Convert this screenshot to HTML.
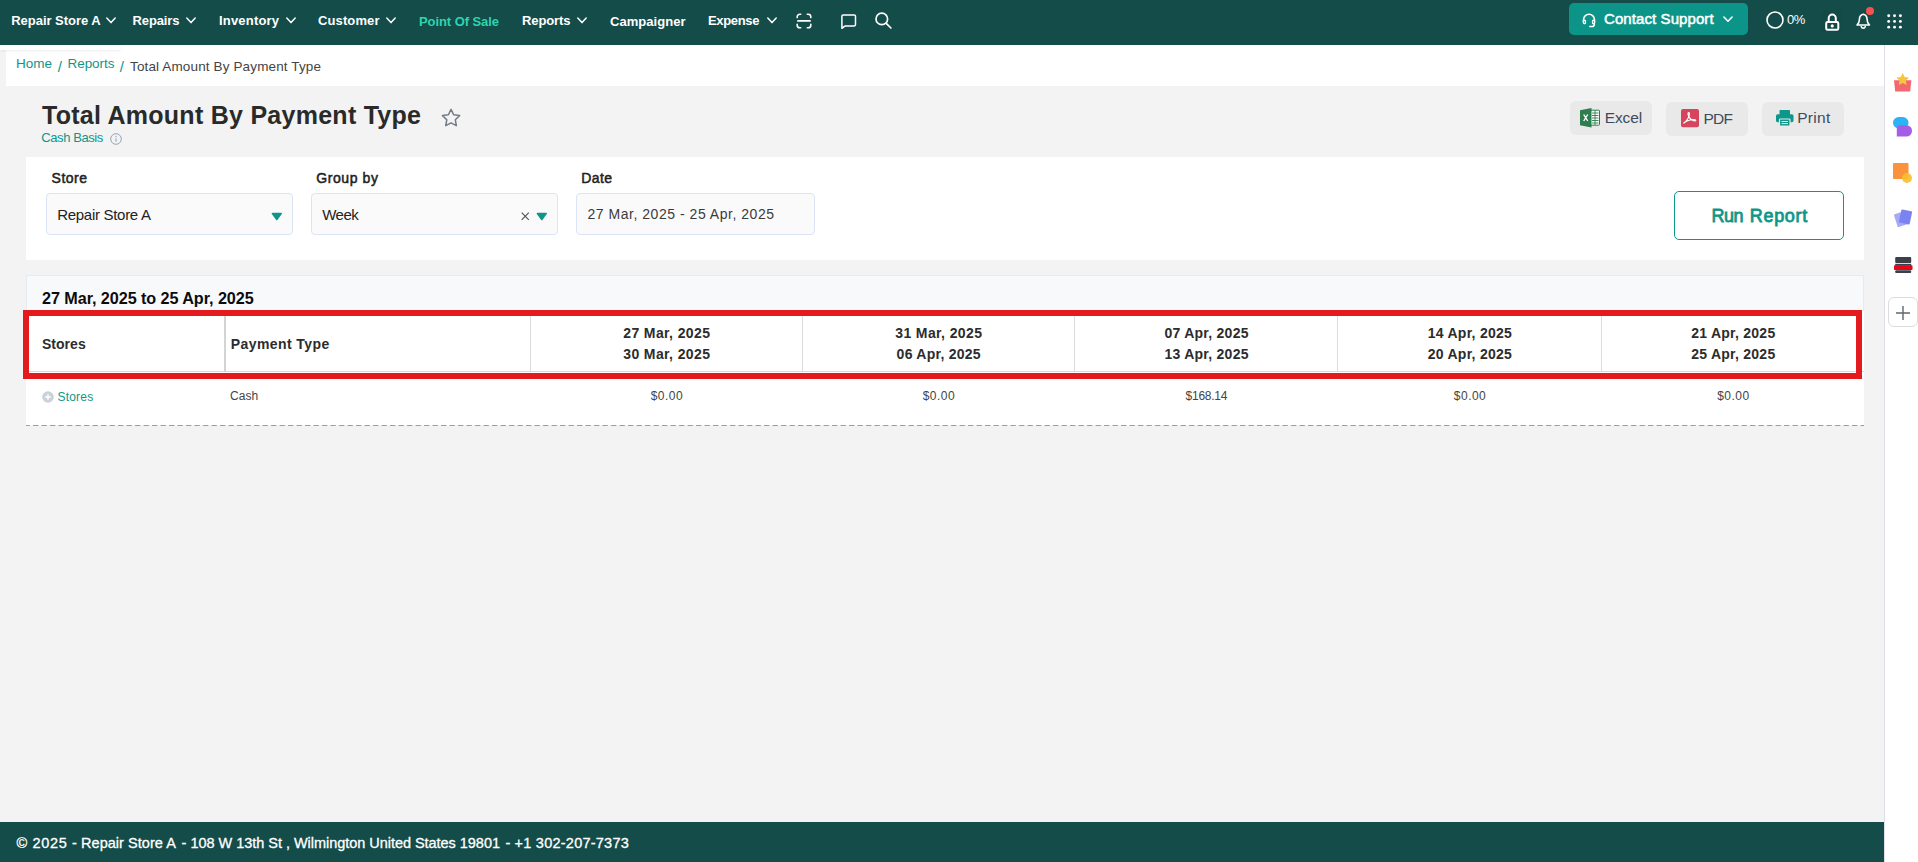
<!DOCTYPE html>
<html lang="en"><head><meta charset="utf-8"><title>Total Amount By Payment Type</title>
<style>
html,body{margin:0;padding:0}
body{width:1918px;height:862px;overflow:hidden;background:#f3f3f3;font-family:"Liberation Sans", sans-serif;position:relative}
.t{position:absolute;white-space:pre;line-height:1}
.b{position:absolute;box-sizing:border-box}
.ic{position:absolute;overflow:visible}
</style></head><body>
<!-- top navigation -->
<div class="b" style="left:0;top:0;width:1918px;height:45px;background:#144c4a"></div>
<div class="b" style="left:6px;top:45px;width:1878px;height:41px;background:#fff"></div>
<div class="b" style="left:0;top:45px;width:121px;height:5px;background:#fff;box-shadow:0 1px 3px rgba(0,0,0,.07)"></div>
<!-- nav chevrons -->
<svg class="ic" style="left:106px;top:17.2px" width="10" height="7" viewBox="0 0 10 7"><path d="M0.8 1 L5 5.6 L9.2 1" fill="none" stroke="#fff" stroke-width="1.5" stroke-linecap="round" stroke-linejoin="round"/></svg>
<svg class="ic" style="left:186px;top:17.2px" width="10" height="7" viewBox="0 0 10 7"><path d="M0.8 1 L5 5.6 L9.2 1" fill="none" stroke="#fff" stroke-width="1.5" stroke-linecap="round" stroke-linejoin="round"/></svg>
<svg class="ic" style="left:286px;top:17.2px" width="10" height="7" viewBox="0 0 10 7"><path d="M0.8 1 L5 5.6 L9.2 1" fill="none" stroke="#fff" stroke-width="1.5" stroke-linecap="round" stroke-linejoin="round"/></svg>
<svg class="ic" style="left:386px;top:17.2px" width="10" height="7" viewBox="0 0 10 7"><path d="M0.8 1 L5 5.6 L9.2 1" fill="none" stroke="#fff" stroke-width="1.5" stroke-linecap="round" stroke-linejoin="round"/></svg>
<svg class="ic" style="left:577px;top:17.2px" width="10" height="7" viewBox="0 0 10 7"><path d="M0.8 1 L5 5.6 L9.2 1" fill="none" stroke="#fff" stroke-width="1.5" stroke-linecap="round" stroke-linejoin="round"/></svg>
<svg class="ic" style="left:767px;top:17.2px" width="10" height="7" viewBox="0 0 10 7"><path d="M0.8 1 L5 5.6 L9.2 1" fill="none" stroke="#fff" stroke-width="1.5" stroke-linecap="round" stroke-linejoin="round"/></svg>
<!-- scan icon -->
<svg class="ic" style="left:796px;top:13px" width="16" height="16" viewBox="0 0 16 16" fill="none" stroke="#fff" stroke-width="1.6" stroke-linecap="round" stroke-linejoin="round"><path d="M1.2 4.600V3.800a2.600 2.600 0 0 1 2.600-2.600h.900M11.300 1.200h.900a2.600 2.600 0 0 1 2.600 2.600v.800M14.800 11.400v.800a2.600 2.600 0 0 1-2.600 2.600h-.900M4.700 14.800h-.900a2.600 2.600 0 0 1-2.600-2.600v-.800"/><path d="M2 7.900H14" stroke-width="1.900"/></svg>
<!-- chat icon -->
<svg class="ic" style="left:840.700px;top:14px" width="15.400" height="15" viewBox="0 0 15.400 15" fill="none" stroke="#fff" stroke-width="1.500" stroke-linejoin="round"><path d="M.9 2.200a1.300 1.300 0 0 1 1.300-1.300H13.200a1.300 1.300 0 0 1 1.300 1.300V10.600a1.300 1.300 0 0 1-1.300 1.300H4.200L.9 14.300Z"/></svg>
<!-- search icon -->
<svg class="ic" style="left:875px;top:11.700px" width="17" height="17" viewBox="0 0 17 17" fill="none" stroke="#fff" stroke-width="1.700" stroke-linecap="round"><circle cx="6.800" cy="6.900" r="5.800"/><path d="M11.200 11.300 L15.900 16"/></svg>
<!-- contact support -->
<div class="b" style="left:1569px;top:3px;width:179px;height:32px;background:#0d9488;border-radius:5px"></div>
<svg class="ic" style="left:1582.300px;top:12.800px" width="14" height="14.500" viewBox="0 0 14 14.500" fill="none" stroke="#fff" stroke-width="1.600" stroke-linecap="round"><path d="M1.500 9V6.700a5.500 5.500 0 0 1 11 0V9"/><rect x=".8" y="6.600" width="3.300" height="4.600" rx="1.500" fill="#fff" stroke="none"/><rect x="9.900" y="6.600" width="3.300" height="4.600" rx="1.500" fill="#fff" stroke="none"/><circle cx="2.600" cy="9" r=".7" fill="#0d9488" stroke="none"/><circle cx="11.400" cy="9" r=".7" fill="#0d9488" stroke="none"/><path d="M12.300 10.800v.4a2.300 2.300 0 0 1-2.300 2.300H7.800"/></svg>
<svg class="ic" style="left:1723px;top:16.200px" width="10" height="7" viewBox="0 0 10 7"><path d="M0.9 1 L5 5.200 L9.100 1" fill="none" stroke="#fff" stroke-width="1.600" stroke-linecap="round" stroke-linejoin="round"/></svg>
<!-- progress circle -->
<svg class="ic" style="left:1766px;top:10.700px" width="18" height="18" viewBox="0 0 18 18"><circle cx="9" cy="9" r="8" fill="none" stroke="#fff" stroke-width="1.600"/></svg>
<!-- lock -->
<div class="b" style="left:1821px;top:10px;width:21px;height:22px;background:#134a48;border-radius:2px"></div>
<svg class="ic" style="left:1824.500px;top:12.700px" width="14.500" height="18" viewBox="0 0 14.500 18" fill="none" stroke="#fff" stroke-width="2" stroke-linejoin="round"><path d="M3.700 9V5.200a3.550 3.700 0 0 1 7.100 0V9"/><rect x="1.200" y="9" width="12.100" height="7.800" rx="1.400"/><circle cx="7.250" cy="12.900" r="1.600" fill="#fff" stroke="none"/></svg>
<!-- bell -->
<svg class="ic" style="left:1855.700px;top:12.500px" width="14.500" height="17" viewBox="0 0 14.500 17" fill="none" stroke="#fff" stroke-width="1.600" stroke-linejoin="round" stroke-linecap="round"><path d="M7.250 1.200C5 1.800 3.400 3.800 3.400 6.400c0 3.300-1.600 4.900-2.400 5.600h12.500c-.8-.7-2.400-2.300-2.400-5.600 0-2.600-1.600-4.600-3.850-5.200Z"/><path d="M5.300 13.600a2 2 0 0 0 3.900 0"/></svg>
<div class="b" style="left:1866.200px;top:6.800px;width:8.200px;height:8.200px;border-radius:50%;background:#f8504f"></div>
<!-- app grid -->
<svg class="ic" style="left:1886.700px;top:13.600px" width="15.100" height="14.900" viewBox="0 0 15.100 14.900" fill="#fff"><circle cx="1.7" cy="1.7" r="1.450"/><circle cx="7.55" cy="1.7" r="1.450"/><circle cx="13.4" cy="1.7" r="1.450"/><circle cx="1.7" cy="7.4" r="1.450"/><circle cx="7.55" cy="7.4" r="1.450"/><circle cx="13.4" cy="7.4" r="1.450"/><circle cx="1.7" cy="13.15" r="1.450"/><circle cx="7.55" cy="13.15" r="1.450"/><circle cx="13.4" cy="13.15" r="1.450"/></svg>

<!-- right sidebar -->
<div class="b" style="left:1884px;top:45px;width:34px;height:817px;background:#fff;border-left:1px solid #dedee8"></div>
<svg class="ic" style="left:1893.700px;top:72.500px" width="17.400" height="18.500" viewBox="0 0 17.400 18.500"><path d="M0 7.200h17.400l-1.200 11.300H1.200Z" fill="#f2686e"/><path d="M8.700 0l1.950 3.950 4.350.63-3.150 3.070.74 4.330L8.700 9.940 4.810 11.980l.74-4.330L2.400 4.580l4.350-.63Z" fill="#f8c63d"/></svg>
<svg class="ic" style="left:1893px;top:116.800px" width="19" height="19.500" viewBox="0 0 19 19.500"><rect x="0" y="0" width="15.500" height="11.500" rx="5.700" fill="#2cb3f5"/><path d="M7.500 8.200h6a5.500 5.500 0 0 1 5.500 5.500v.300a5.500 5.500 0 0 1-5.500 5.500H3.800V11.900a3.700 3.700 0 0 1 3.700-3.700Z" fill="#a45ee5"/></svg>
<svg class="ic" style="left:1893px;top:162.800px" width="19" height="20" viewBox="0 0 19 20"><rect x="0" y="0" width="15.500" height="16" rx="1" fill="#fb923c"/><circle cx="14" cy="15" r="5" fill="#f6c02f" opacity=".9"/></svg>
<svg class="ic" style="left:1894px;top:209px" width="18" height="19" viewBox="0 0 18 19"><rect x="1.500" y="3.500" width="11.500" height="13.500" rx="1" fill="#a5aaf7" transform="rotate(-18 7 10)"/><rect x="6" y="1.200" width="11" height="13.500" rx="1" fill="#7b83f0" transform="rotate(12 11.500 8)"/></svg>
<svg class="ic" style="left:1893.500px;top:257px" width="18.500" height="16" viewBox="0 0 18.500 16"><rect x="1.200" y="0" width="16" height="6" rx="1" fill="#3a3f4a"/><rect x="1.200" y="6.800" width="16" height="2" fill="#3a3f4a"/><rect x="0" y="8.300" width="18.500" height="4.800" rx=".8" fill="#e0081b"/><rect x="1.200" y="13.300" width="16" height="2.700" rx="1" fill="#3a3f4a"/></svg>
<div class="b" style="left:1888px;top:297px;width:29.500px;height:30px;border:1px solid #dcdcdc;border-radius:6px;background:#fff"></div>
<svg class="ic" style="left:1896px;top:305.700px" width="14" height="14" viewBox="0 0 14 14"><path d="M7 0V14M0 7H14" stroke="#5f6672" stroke-width="1.400" fill="none"/></svg>

<!-- title row icons -->
<svg class="ic" style="left:440.500px;top:108.300px" width="20.100" height="19" viewBox="0 0 19 18"><path d="M9.500 1.300l2.500 5.100 5.600.8-4.050 3.950.95 5.600L9.500 14.100 4.500 16.750l.95-5.600L1.400 7.200l5.600-.8Z" fill="none" stroke="#747c8a" stroke-width="1.450" stroke-linejoin="round"/></svg>
<svg class="ic" style="left:110px;top:133px" width="12" height="12" viewBox="0 0 12 12"><circle cx="6" cy="6" r="5.300" fill="none" stroke="#94a5b8" stroke-width="1"/><path d="M6 5.200V8.800" stroke="#94a5b8" stroke-width="1.100"/><circle cx="6" cy="3.500" r=".7" fill="#94a5b8"/></svg>

<!-- export buttons -->
<div class="b" style="left:1570px;top:101px;width:82px;height:34px;background:#e9e9e9;border-radius:6px"></div>
<div class="b" style="left:1666px;top:102px;width:82px;height:33.500px;background:#e9e9e9;border-radius:6px"></div>
<div class="b" style="left:1762px;top:102px;width:82px;height:33.500px;background:#e9e9e9;border-radius:6px"></div>
<svg class="ic" style="left:1580px;top:108px" width="20" height="19.500" viewBox="0 0 20 19.500"><rect x="9" y="2.200" width="10.500" height="15" rx=".8" fill="#fff" stroke="#2e7d4f" stroke-width="1"/><path d="M12 5h6.500M12 7.500h6.500M12 10h6.500M12 12.500h6.500M12 15h6.500M15 2.500v14.500" stroke="#2e7d4f" stroke-width=".9"/><path d="M0 2.200L11.500 0V19.500L0 17.300Z" fill="#2e7d4f"/><path d="M3.700 6.500L7.700 13M7.700 6.500L3.700 13" stroke="#fff" stroke-width="1.400"/></svg>
<svg class="ic" style="left:1681px;top:108.700px" width="18" height="18.300" viewBox="0 0 18 18.300"><rect width="18" height="18.300" rx="2" fill="#d6455d"/><path d="M3 13.800c1.800-1 4.200-4.300 5.200-7.300.5-1.600.2-3-.5-3s-1 1.500-.2 3.300c1 2.300 3.400 4.700 5.900 5.100 1.500.2 1.900-.8.700-1.100-2.300-.6-7.600.4-10.600 2.700-.9.700-1.100.6-.5.300Z" fill="none" stroke="#fff" stroke-width="1.100" stroke-linejoin="round"/></svg>
<svg class="ic" style="left:1775.500px;top:110px" width="17.500" height="16" viewBox="0 0 17.500 16" fill="#0f968a"><rect x="3.500" y="0" width="10.500" height="5" rx=".8"/><rect x="0" y="4.200" width="17.500" height="8" rx="1.600"/><rect x="3.500" y="9" width="10.500" height="7" rx=".8" stroke="#e9e9e9" stroke-width="1.200"/><path d="M5.500 11.500h6.500M5.500 13.600h6.500" stroke="#e9e9e9" stroke-width="1"/></svg>

<!-- filter panel -->
<div class="b" style="left:26px;top:157px;width:1838px;height:103px;background:#fff"></div>
<div class="b" style="left:46px;top:193px;width:247px;height:42px;background:#fafafa;border:1px solid #dbe4f4;border-radius:4px"></div>
<div class="b" style="left:311px;top:193px;width:247px;height:42px;background:#fafafa;border:1px solid #dbe4f4;border-radius:4px"></div>
<div class="b" style="left:576px;top:193px;width:239px;height:42px;background:#fafafa;border:1px solid #dbe4f4;border-radius:4px"></div>
<svg class="ic" style="left:271.200px;top:211.600px" width="11.600" height="9" viewBox="0 0 11 8.500"><path d="M1.300 .8h8.400a.7.700 0 0 1 .55 1.150L6.100 7.500a.8.800 0 0 1-1.200 0L.75 1.950A.7.700 0 0 1 1.300.8Z" fill="#0f968a"/></svg>
<svg class="ic" style="left:536.100px;top:211.600px" width="11.600" height="9" viewBox="0 0 11 8.500"><path d="M1.300 .8h8.400a.7.700 0 0 1 .55 1.150L6.100 7.500a.8.800 0 0 1-1.200 0L.75 1.950A.7.700 0 0 1 1.300.8Z" fill="#0f968a"/></svg>
<svg class="ic" style="left:520.500px;top:211.500px" width="8.500" height="8.500" viewBox="0 0 8.500 8.500"><path d="M.7.700l7.100 7.100M7.800.700L.7 7.800" stroke="#555" stroke-width="1.200"/></svg>
<div class="b" style="left:1674px;top:191px;width:170px;height:49px;background:#fff;border:1.500px solid #0f968a;border-radius:5px"></div>

<!-- report panel -->
<div class="b" style="left:26px;top:275px;width:1838px;height:37px;background:#f8f9fb;border:1px solid #e6eaf1"></div>
<div class="b" style="left:26px;top:311px;width:1838px;height:114px;background:#fff"></div>
<svg class="ic" style="left:26px;top:425px;overflow:hidden" width="1838" height="1" viewBox="0 0 1838 1"><path d="M-1.400 .5H1838" stroke="#9c9c9c" stroke-width="1" stroke-dasharray="5.200 3.300" fill="none"/></svg>
<!-- header cell borders -->
<div class="b" style="left:26px;top:371px;width:1838px;height:1px;background:#d9d9d9"></div>
<div class="b" style="left:224px;top:316px;width:2px;height:56px;background:#d4d4d4"></div>
<div class="b" style="left:530px;top:316px;width:1px;height:56px;background:#dcdcdc"></div>
<div class="b" style="left:802px;top:316px;width:1px;height:56px;background:#dcdcdc"></div>
<div class="b" style="left:1074px;top:316px;width:1px;height:56px;background:#dcdcdc"></div>
<div class="b" style="left:1337px;top:316px;width:1px;height:56px;background:#dcdcdc"></div>
<div class="b" style="left:1601px;top:316px;width:1px;height:56px;background:#dcdcdc"></div>
<!-- red highlight -->
<div class="b" style="left:23px;top:310px;width:1838.5px;height:69px;border:6px solid #e31b1f"></div>
<!-- row expander -->
<svg class="ic" style="left:42px;top:391px" width="12" height="12" viewBox="0 0 12 12"><circle cx="6" cy="6" r="5.800" fill="#cbd1da"/><path d="M6 3.200V8.800M3.200 6H8.800" stroke="#fff" stroke-width="1.400"/></svg>

<!-- footer -->
<div class="b" style="left:0;top:822px;width:1884px;height:40px;background:#144c4a"></div>

<header>
<span class="t" style="left:11.20px;top:14.00px;font-size:13px;font-weight:700;color:#fff;letter-spacing:-0.025px;">Repair Store A</span>
<span class="t" style="left:132.50px;top:14.00px;font-size:13px;font-weight:700;color:#fff;letter-spacing:-0.117px;">Repairs</span>
<span class="t" style="left:219.00px;top:14.00px;font-size:13px;font-weight:700;color:#fff;letter-spacing:0.186px;">Inventory</span>
<span class="t" style="left:318.00px;top:14.00px;font-size:13px;font-weight:700;color:#fff;letter-spacing:0.116px;">Customer</span>
<span class="t" style="left:419.00px;top:15.00px;font-size:13px;font-weight:700;color:#2dd4b0;letter-spacing:-0.076px;">Point Of Sale</span>
<span class="t" style="left:522.00px;top:14.00px;font-size:13px;font-weight:700;color:#fff;letter-spacing:-0.104px;">Reports</span>
<span class="t" style="left:610.00px;top:15.00px;font-size:13px;font-weight:700;color:#fff;letter-spacing:0.04px;">Campaigner</span>
<span class="t" style="left:708.00px;top:14.00px;font-size:13px;font-weight:700;color:#fff;letter-spacing:-0.331px;">Expense</span>
<span class="t" style="left:1604.00px;top:11.30px;font-size:15px;font-weight:400;color:#fff;letter-spacing:0.085px;-webkit-text-stroke:0.5px #fff;">Contact Support</span>
<span class="t" style="left:1787.00px;top:13.20px;font-size:13px;font-weight:400;color:#fff;letter-spacing:-0.397px;">0%</span>
</header>
<nav>
<span class="t" style="left:16.00px;top:56.57px;font-size:13.5px;font-weight:400;color:#0f968a;letter-spacing:-0.005px;">Home</span>
<span class="t" style="left:57.70px;top:58.90px;font-size:15px;font-weight:400;color:#0f968a;letter-spacing:0.128px;">/</span>
<span class="t" style="left:67.50px;top:56.57px;font-size:13.5px;font-weight:400;color:#0f968a;letter-spacing:-0.047px;">Reports</span>
<span class="t" style="left:119.70px;top:58.90px;font-size:15px;font-weight:400;color:#0f968a;letter-spacing:0.128px;">/</span>
<span class="t" style="left:130.00px;top:59.57px;font-size:13.5px;font-weight:400;color:#444;letter-spacing:0.135px;">Total Amount By Payment Type</span>
</nav>
<main>
<span class="t" style="left:42.00px;top:103.14px;font-size:25px;font-weight:700;color:#2a2a2a;letter-spacing:0.266px;">Total Amount By Payment Type</span>
<span class="t" style="left:41.30px;top:131.30px;font-size:13px;font-weight:400;color:#0f968a;letter-spacing:-0.417px;">Cash Basis</span>
<span class="t" style="left:1604.70px;top:110.48px;font-size:15.5px;font-weight:400;color:#3f4b5b;letter-spacing:-0.077px;">Excel</span>
<span class="t" style="left:1703.40px;top:111.28px;font-size:15.5px;font-weight:400;color:#3f4b5b;letter-spacing:-0.75px;">PDF</span>
<span class="t" style="left:1797.20px;top:110.48px;font-size:15.5px;font-weight:400;color:#3f4b5b;letter-spacing:0.281px;">Print</span>
<span class="t" style="left:51.60px;top:171.15px;font-size:14px;font-weight:400;color:#222;letter-spacing:0.483px;-webkit-text-stroke:0.5px #222;">Store</span>
<span class="t" style="left:316.20px;top:171.15px;font-size:14px;font-weight:400;color:#222;letter-spacing:0.587px;-webkit-text-stroke:0.5px #222;">Group by</span>
<span class="t" style="left:581.30px;top:171.15px;font-size:14px;font-weight:400;color:#222;letter-spacing:0.374px;-webkit-text-stroke:0.5px #222;">Date</span>
<span class="t" style="left:57.20px;top:207.30px;font-size:15px;font-weight:400;color:#222;letter-spacing:-0.289px;">Repair Store A</span>
<span class="t" style="left:322.20px;top:207.30px;font-size:15px;font-weight:400;color:#222;letter-spacing:-0.493px;">Week</span>
<span class="t" style="left:587.50px;top:206.65px;font-size:14px;font-weight:400;color:#3a3a3a;letter-spacing:0.527px;">27 Mar, 2025 - 25 Apr, 2025</span>
<span class="t" style="left:1711.50px;top:207.36px;font-size:18px;font-weight:400;color:#0f968a;letter-spacing:-0.566px;-webkit-text-stroke:0.8px #0f968a;">Run</span>
<span class="t" style="left:1749.80px;top:207.36px;font-size:18px;font-weight:400;color:#0f968a;letter-spacing:0.674px;-webkit-text-stroke:0.8px #0f968a;">Report</span>
<span class="t" style="left:42.00px;top:290.49px;font-size:16.2px;font-weight:700;color:#0c0c0c;letter-spacing:-0.07px;">27 Mar, 2025 to 25 Apr, 2025</span>
<span class="t" style="left:42.00px;top:337.15px;font-size:14px;font-weight:700;color:#2c2c2c;letter-spacing:0.024px;">Stores</span>
<span class="t" style="left:230.70px;top:337.15px;font-size:14px;font-weight:700;color:#2c2c2c;letter-spacing:0.428px;">Payment Type</span>
<span class="t" style="left:623.25px;top:326.45px;font-size:14px;font-weight:700;color:#2c2c2c;letter-spacing:0.38px;">27 Mar, 2025</span>
<span class="t" style="left:623.25px;top:347.45px;font-size:14px;font-weight:700;color:#2c2c2c;letter-spacing:0.38px;">30 Mar, 2025</span>
<span class="t" style="left:895.25px;top:326.45px;font-size:14px;font-weight:700;color:#2c2c2c;letter-spacing:0.38px;">31 Mar, 2025</span>
<span class="t" style="left:896.60px;top:347.45px;font-size:14px;font-weight:700;color:#2c2c2c;letter-spacing:0.253px;">06 Apr, 2025</span>
<span class="t" style="left:1164.50px;top:326.45px;font-size:14px;font-weight:700;color:#2c2c2c;letter-spacing:0.253px;">07 Apr, 2025</span>
<span class="t" style="left:1164.50px;top:347.45px;font-size:14px;font-weight:700;color:#2c2c2c;letter-spacing:0.253px;">13 Apr, 2025</span>
<span class="t" style="left:1427.80px;top:326.45px;font-size:14px;font-weight:700;color:#2c2c2c;letter-spacing:0.253px;">14 Apr, 2025</span>
<span class="t" style="left:1427.80px;top:347.45px;font-size:14px;font-weight:700;color:#2c2c2c;letter-spacing:0.253px;">20 Apr, 2025</span>
<span class="t" style="left:1691.20px;top:326.45px;font-size:14px;font-weight:700;color:#2c2c2c;letter-spacing:0.253px;">21 Apr, 2025</span>
<span class="t" style="left:1691.20px;top:347.45px;font-size:14px;font-weight:700;color:#2c2c2c;letter-spacing:0.253px;">25 Apr, 2025</span>
<span class="t" style="left:57.50px;top:390.84px;font-size:12px;font-weight:400;color:#0f968a;letter-spacing:0.203px;">Stores</span>
<span class="t" style="left:230.00px;top:389.84px;font-size:12px;font-weight:400;color:#444;letter-spacing:0.095px;">Cash</span>
<span class="t" style="left:650.70px;top:389.84px;font-size:12px;font-weight:400;color:#444;letter-spacing:0.492px;">$0.00</span>
<span class="t" style="left:922.70px;top:389.84px;font-size:12px;font-weight:400;color:#444;letter-spacing:0.492px;">$0.00</span>
<span class="t" style="left:1185.50px;top:389.84px;font-size:12px;font-weight:400;color:#444;letter-spacing:-0.232px;">$168.14</span>
<span class="t" style="left:1453.80px;top:389.84px;font-size:12px;font-weight:400;color:#444;letter-spacing:0.492px;">$0.00</span>
<span class="t" style="left:1717.20px;top:389.84px;font-size:12px;font-weight:400;color:#444;letter-spacing:0.492px;">$0.00</span>
</main>
<footer>
<span class="t" style="left:16.40px;top:836.33px;font-size:14.5px;font-weight:400;color:#fff;letter-spacing:0.683px;-webkit-text-stroke:0.3px #fff;">© 2025</span>
<span class="t" style="left:71.90px;top:836.33px;font-size:14.5px;font-weight:400;color:#fff;letter-spacing:0.656px;-webkit-text-stroke:0.3px #fff;">-</span>
<span class="t" style="left:81.00px;top:836.33px;font-size:14.5px;font-weight:400;color:#fff;letter-spacing:0.045px;-webkit-text-stroke:0.3px #fff;">Repair Store A</span>
<span class="t" style="left:181.40px;top:836.33px;font-size:14.5px;font-weight:400;color:#fff;letter-spacing:0.656px;-webkit-text-stroke:0.3px #fff;">-</span>
<span class="t" style="left:190.50px;top:836.33px;font-size:14.5px;font-weight:400;color:#fff;letter-spacing:-0.036px;-webkit-text-stroke:0.3px #fff;">108 W 13th St , Wilmington United States 19801</span>
<span class="t" style="left:505.50px;top:836.33px;font-size:14.5px;font-weight:400;color:#fff;letter-spacing:0.656px;-webkit-text-stroke:0.3px #fff;">-</span>
<span class="t" style="left:514.60px;top:836.33px;font-size:14.5px;font-weight:400;color:#fff;letter-spacing:0.238px;-webkit-text-stroke:0.3px #fff;">+1 302-207-7373</span>
</footer>
</body></html>
